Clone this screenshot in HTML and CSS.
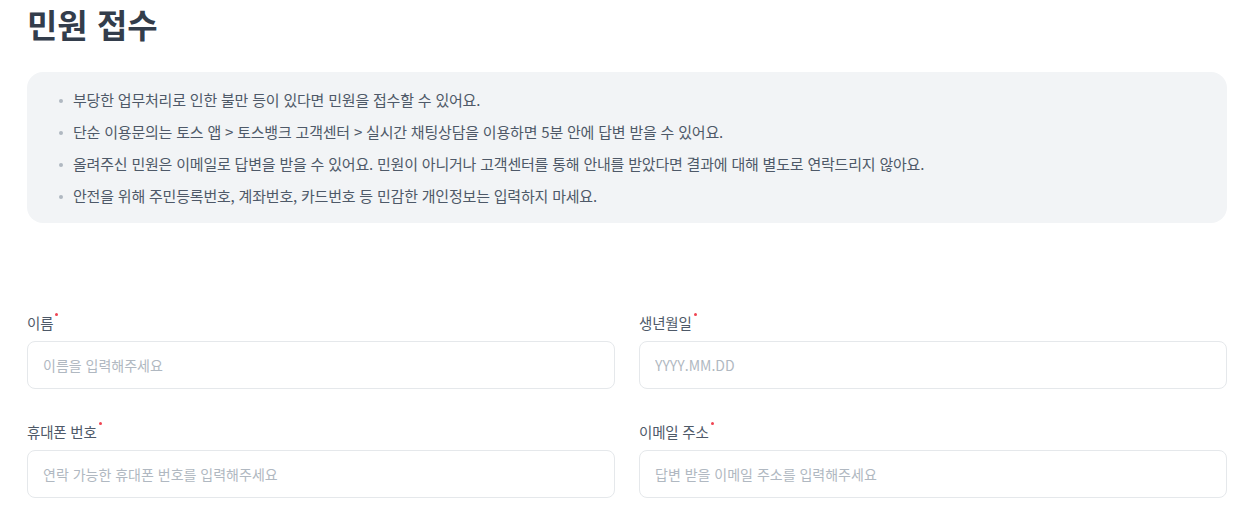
FILE: index.html
```html
<!DOCTYPE html>
<html lang="ko">
<head>
<meta charset="utf-8">
<title>민원 접수</title>
<link rel="stylesheet" href="styles.css">
</head>
<body>
<main class="page">
  <h1 class="title">민원 접수</h1>
  <section class="notice">
    <ul class="notice-list">
      <li>부당한 업무처리로 인한 불만 등이 있다면 민원을 접수할 수 있어요.</li>
      <li>단순 이용문의는 토스 앱 &gt; 토스뱅크 고객센터 &gt; 실시간 채팅상담을 이용하면 5분 안에 답변 받을 수 있어요.</li>
      <li>올려주신 민원은 이메일로 답변을 받을 수 있어요. 민원이 아니거나 고객센터를 통해 안내를 받았다면 결과에 대해 별도로 연락드리지 않아요.</li>
      <li>안전을 위해 주민등록번호, 계좌번호, 카드번호 등 민감한 개인정보는 입력하지 마세요.</li>
    </ul>
  </section>
  <form class="form">
    <div class="field">
      <label class="label" for="name">이름<span class="req"></span></label>
      <input class="input" id="name" type="text" placeholder="이름을 입력해주세요">
    </div>
    <div class="field">
      <label class="label" for="birth">생년월일<span class="req"></span></label>
      <input class="input" id="birth" type="text" placeholder="YYYY.MM.DD">
    </div>
    <div class="field">
      <label class="label" for="phone">휴대폰 번호<span class="req"></span></label>
      <input class="input" id="phone" type="text" placeholder="연락 가능한 휴대폰 번호를 입력해주세요">
    </div>
    <div class="field">
      <label class="label" for="email">이메일 주소<span class="req"></span></label>
      <input class="input" id="email" type="text" placeholder="답변 받을 이메일 주소를 입력해주세요">
    </div>
  </form>
</main>
</body>
</html>
```
FILE: styles.css
```css
* { box-sizing: border-box; }
html, body { margin: 0; background: #ffffff; }
body {
  font-family: "Noto Sans CJK KR", "Noto Sans", sans-serif;
  color: #333d4b;
}
.page {
  width: 1227px;
  padding-left: 27px;
}
.title {
  margin: 0;
  font-size: 33px;
  line-height: 48px;
  font-weight: 700;
  color: #333d4b;
}
.notice {
  margin-top: 24px;
  background: #f2f4f6;
  border-radius: 16px;
  padding: 12px 0 11px 32px;
}
.notice-list {
  list-style: none;
  margin: 0;
  padding: 0;
}
.notice-list li {
  position: relative;
  padding-left: 14px;
  font-size: 15px;
  letter-spacing: -0.2px;
  line-height: 32px;
  color: #4e5968;
}
.notice-list li::before {
  content: "";
  position: absolute;
  left: 0;
  top: 15px;
  width: 4px;
  height: 4px;
  border-radius: 50%;
  background: #b0b8c1;
}
.form {
  margin-top: 90px;
  display: grid;
  grid-template-columns: 1fr 1fr;
  column-gap: 24px;
  row-gap: 33px;
}
.field {
  display: flex;
  flex-direction: column;
}
.label {
  font-size: 14.5px;
  letter-spacing: -0.2px;
  line-height: 20px;
  color: #4e5968;
  margin-bottom: 8px;
}
.req {
  display: inline-block;
  width: 3px;
  height: 3px;
  border-radius: 50%;
  background: #f04452;
  vertical-align: top;
  margin-top: 0;
  margin-left: 2px;
}
.input {
  height: 48px;
  border: 1px solid #e5e8eb;
  border-radius: 8px;
  padding: 0 15px;
  font-family: inherit;
  font-size: 14px;
  color: #333d4b;
  background: #ffffff;
  outline: none;
}
.input::placeholder {
  color: #b0b8c1;
}
```
